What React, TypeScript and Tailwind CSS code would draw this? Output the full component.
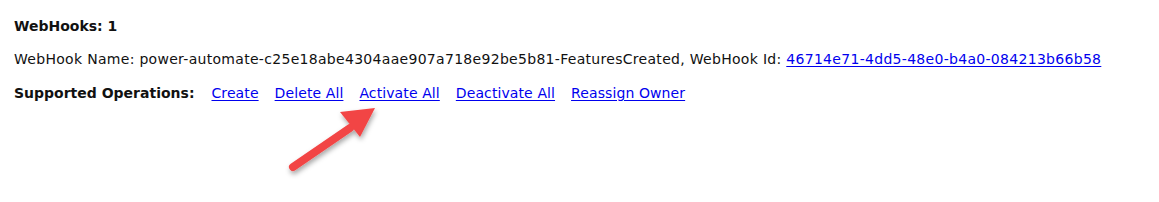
export default function App() {
  const link = "text-[#0000ee] underline underline-offset-2 tracking-[0.1px]";
  return (
    <div className="relative w-[1159px] h-[202px] bg-white text-[#111] text-[14px] tracking-[0.3px] leading-none" style={{ fontFamily: '"DejaVu Sans", Verdana, sans-serif' }}>
      <div className="pl-[14px] pt-[19px] flex flex-col">
        <div className="font-bold h-[14px] tracking-normal">WebHooks: 1</div>
        <div className="mt-[19px] h-[14px] whitespace-nowrap">
          WebHook Name: power-automate-c25e18abe4304aae907a718e92be5b81-FeaturesCreated, WebHook Id:{" "}
          <a className="text-[#0000ee] underline underline-offset-2" href="#">46714e71-4dd5-48e0-b4a0-084213b66b58</a>
        </div>
        <div className="mt-[20px] flex items-center gap-[16px] whitespace-nowrap">
          <span className="font-bold tracking-normal mr-[1px]">Supported Operations:</span>
          <a className={link} href="#">Create</a>
          <a className={link} href="#">Delete All</a>
          <a className={link} href="#">Activate All</a>
          <a className={link} href="#">Deactivate All</a>
          <a className={link} href="#">Reassign Owner</a>
        </div>
      </div>
      <svg className="absolute left-[280px] top-[100px]" width="110" height="85" viewBox="0 0 110 85">
        <defs>
          <filter id="sh" x="-20%" y="-20%" width="150%" height="150%">
            <feDropShadow dx="1" dy="3" stdDeviation="2.5" floodColor="#000" floodOpacity="0.35" />
          </filter>
        </defs>
        <g filter="url(#sh)">
          <line x1="13" y1="67" x2="70" y2="28" stroke="#f24545" strokeWidth="8" strokeLinecap="round" />
          <polygon points="95,8 60,12 80,37" fill="#f24545" />
        </g>
      </svg>
    </div>
  );
}
